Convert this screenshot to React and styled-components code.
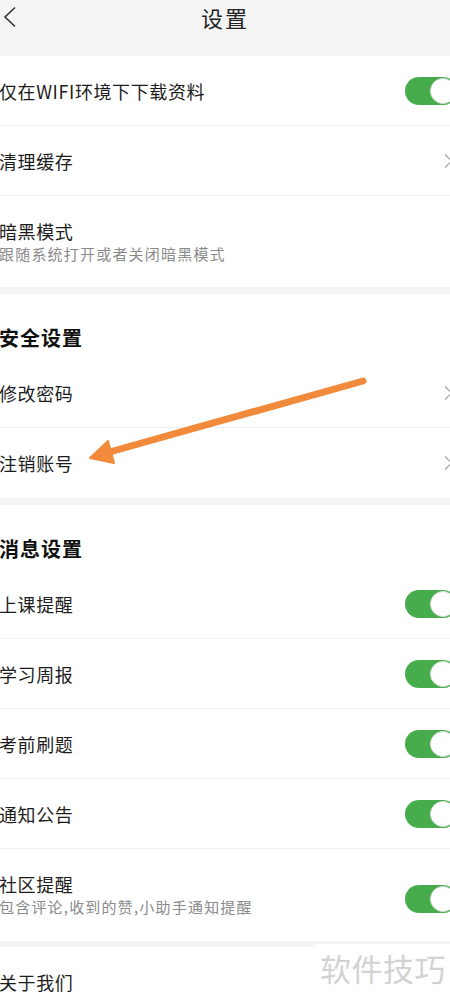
import React from 'react';
import styled, { createGlobalStyle } from 'styled-components';

const GlobalStyle = createGlobalStyle`
  html, body {
    margin: 0;
    padding: 0;
    background: #ffffff;
    overflow: hidden;
  }
  body {
    font-family: "Noto Sans CJK SC", "Noto Sans", sans-serif;
    color: #1c1c1c;
  }
`;

const Page = styled.div`
  position: relative;
  width: 450px;
  height: 1001px;
  overflow: hidden;
  background: #ffffff;
`;

const Header = styled.header`
  height: 56px;
  background: #f4f4f4;
  display: grid;
  grid-template-columns: 40px 1fr 40px;
  align-items: start;
`;

const BackButton = styled.div`
  height: 34px;
  display: flex;
  align-items: center;
  padding-left: 2px;
`;

const HeaderTitle = styled.h1`
  margin: 0;
  height: 34px;
  line-height: 34px;
  text-align: center;
  font-size: 22px;
  font-weight: 400;
  letter-spacing: 2px;
  color: #222;
`;

const Section = styled.section`
  background: #ffffff;
`;

const Gap = styled.div`
  height: ${({ $h }) => $h || 7}px;
  background: #f4f4f4;
`;

const SectionTitle = styled.h2`
  margin: 0;
  height: 64px;
  box-sizing: border-box;
  padding-top: 31px;
  line-height: 26px;
  font-size: 20px;
  font-weight: 700;
  letter-spacing: 1px;
  color: #111;
  margin-left: -1px;
`;

const Row = styled.div`
  height: ${({ $h }) => $h || 70}px;
  box-sizing: border-box;
  display: flex;
  align-items: center;
  justify-content: space-between;
  border-bottom: ${({ $last }) => ($last ? 'none' : '1px solid #efefef')};
`;

const Texts = styled.div`
  display: flex;
  flex-direction: column;
  margin-left: -1px;
`;

const Label = styled.span`
  font-size: 18px;
  line-height: 24px;
  letter-spacing: 0.6px;
  color: #1c1c1c;
`;

const Sub = styled.span`
  font-size: 15px;
  line-height: 22px;
  letter-spacing: 1.2px;
  color: #8a8a8a;
`;

const Toggle = styled.div`
  position: relative;
  width: 52px;
  height: 28px;
  border-radius: 14px;
  background: #47ad4c;
  margin-right: -7px;
  margin-top: ${({ $offset }) => $offset || 0}px;
  flex-shrink: 0;

  &::after {
    content: '';
    position: absolute;
    top: 1px;
    right: 1px;
    width: 26px;
    height: 26px;
    box-sizing: border-box;
    border-radius: 50%;
    background: #ffffff;
    border: 1px solid #dcdcdc;
  }
`;

const ChevronWrap = styled.div`
  margin-right: -3px;
  display: flex;
  align-items: center;
`;

const Overlay = styled.svg`
  position: absolute;
  left: 0;
  top: 0;
  width: 450px;
  height: 1001px;
  pointer-events: none;
`;

const Watermark = styled.div`
  position: absolute;
  left: 315px;
  right: 0;
  top: 944px;
  bottom: 0;
  background: #ffffff;
  padding-left: 5px;
  font-size: 31px;
  line-height: 48px;
  color: #d2d2d2;
  letter-spacing: 0.5px;
`;

function Chevron() {
  return (
    <ChevronWrap>
      <svg width="10" height="16" viewBox="0 0 10 16">
        <path d="M2 1.5 L8.5 8 L2 14.5" fill="none" stroke="#a5a5a5" strokeWidth="1.2" />
      </svg>
    </ChevronWrap>
  );
}

function Item({ label, sub, toggle, chevron, h, last, offset }) {
  return (
    <Row $h={h} $last={last}>
      <Texts>
        <Label>{label}</Label>
        {sub && <Sub>{sub}</Sub>}
      </Texts>
      {toggle && <Toggle $offset={offset} />}
      {chevron && <Chevron />}
    </Row>
  );
}

export default function App() {
  return (
    <>
      <GlobalStyle />
      <Page>
        <Header>
          <BackButton>
            <svg width="16" height="22" viewBox="0 0 16 22">
              <path d="M13 1.5 L3 11 L13 20.5" fill="none" stroke="#333" strokeWidth="1.6" />
            </svg>
          </BackButton>
          <HeaderTitle>设置</HeaderTitle>
          <div />
        </Header>

        <Section>
          <Item label="仅在WIFI环境下下载资料" toggle />
          <Item label="清理缓存" chevron />
          <Item label="暗黑模式" sub="跟随系统打开或者关闭暗黑模式" h={91} last />
        </Section>
        <Gap />

        <Section>
          <SectionTitle>安全设置</SectionTitle>
          <Item label="修改密码" chevron />
          <Item label="注销账号" chevron last />
        </Section>
        <Gap />

        <Section>
          <SectionTitle>消息设置</SectionTitle>
          <Item label="上课提醒" toggle />
          <Item label="学习周报" toggle />
          <Item label="考前刷题" toggle />
          <Item label="通知公告" toggle />
          <Item label="社区提醒" sub="包含评论,收到的赞,小助手通知提醒" toggle h={92} offset={8} last />
        </Section>
        <Gap $h={6} />

        <Section>
          <Item label="关于我们" last />
        </Section>

        <Overlay viewBox="0 0 450 1001">
          <line x1="363" y1="381" x2="106" y2="453" stroke="#f18a3b" strokeWidth="7" strokeLinecap="round" />
          <polygon points="90,458 108,441 114,463" fill="#f18a3b" stroke="#f18a3b" strokeWidth="2" strokeLinejoin="round" />
        </Overlay>

        <Watermark>软件技巧</Watermark>
      </Page>
    </>
  );
}
